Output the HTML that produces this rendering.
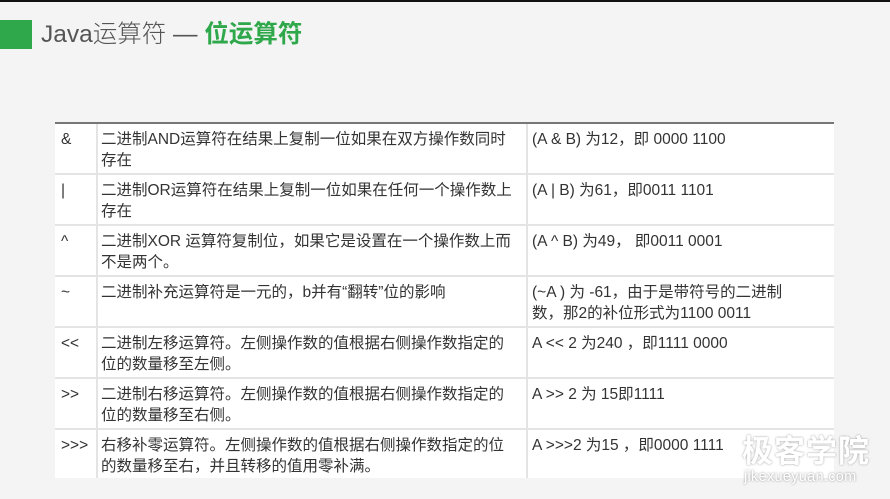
<!DOCTYPE html>
<html><head><meta charset="utf-8"><style>
body{margin:0;width:890px;height:499px;background:#f4f4f4;position:relative;overflow:hidden;font-family:"Liberation Sans","Noto Sans CJK SC",sans-serif;}
.top{position:absolute;left:0;top:0;width:890px;height:2px;background:#111}
.sq{position:absolute;left:0;top:20px;width:32px;height:29px;background:#2ea84a}
.title{position:absolute;left:41px;top:17px;font-size:24.5px;color:#555;line-height:36px;font-weight:300}
.title b{color:#2ea84a;font-weight:bold}
.tbl{position:absolute;left:55px;top:122px;width:779px;height:354px;background:#fff;border-top:2px solid #777}
.row{position:absolute;left:0;width:779px;height:51px;border-bottom:2px solid #e4e4e4;box-sizing:border-box}
.c{position:absolute;top:5px;font-size:15.5px;color:#333;line-height:21px;white-space:nowrap}
.c1{left:6px}.c2{left:46px}.c3{left:477px}
.v1{position:absolute;left:41px;top:0;width:2px;height:354px;background:#e4e4e4}
.v2{position:absolute;left:471px;top:0;width:2px;height:354px;background:#e4e4e4}
.wm{position:absolute;left:742px;top:434px;color:#fff;font-size:31px;font-weight:bold;letter-spacing:1px;text-shadow:0 0 2px #999;line-height:36px}
.wm2{position:absolute;left:744px;top:469px;color:#fff;font-size:14.5px;text-shadow:0 0 2px #888;letter-spacing:.3px}
</style></head><body>
<div class="top"></div>
<div class="sq"></div>
<div class="title">Java运算符 — <b>位运算符</b></div>
<div class="tbl">
<div class="row" style="top:0"><div class="c c1">&amp;</div><div class="c c2">二进制AND运算符在结果上复制一位如果在双方操作数同时<br>存在</div><div class="c c3">(A &amp; B) 为12，即 0000 1100</div></div>
<div class="row" style="top:51px"><div class="c c1">|</div><div class="c c2">二进制OR运算符在结果上复制一位如果在任何一个操作数上<br>存在</div><div class="c c3">(A | B) 为61，即0011 1101</div></div>
<div class="row" style="top:102px"><div class="c c1">^</div><div class="c c2">二进制XOR 运算符复制位，如果它是设置在一个操作数上而<br>不是两个。</div><div class="c c3">(A ^ B) 为49， 即0011 0001</div></div>
<div class="row" style="top:153px"><div class="c c1">~</div><div class="c c2">二进制补充运算符是一元的，b并有“翻转”位的影响</div><div class="c c3">(~A ) 为 -61，由于是带符号的二进制<br>数，那2的补位形式为1100 0011</div></div>
<div class="row" style="top:204px"><div class="c c1">&lt;&lt;</div><div class="c c2">二进制左移运算符。左侧操作数的值根据右侧操作数指定的<br>位的数量移至左侧。</div><div class="c c3">A &lt;&lt; 2 为240 ，即1111 0000</div></div>
<div class="row" style="top:255px"><div class="c c1">&gt;&gt;</div><div class="c c2">二进制右移运算符。左侧操作数的值根据右侧操作数指定的<br>位的数量移至右侧。</div><div class="c c3">A &gt;&gt; 2 为 15即1111</div></div>
<div class="row" style="top:306px;border-bottom:none"><div class="c c1">&gt;&gt;&gt;</div><div class="c c2">右移补零运算符。左侧操作数的值根据右侧操作数指定的位<br>的数量移至右，并且转移的值用零补满。</div><div class="c c3">A &gt;&gt;&gt;2 为15 ，即0000 1111</div></div>
<div class="v1"></div><div class="v2"></div>
</div>
<div class="wm">极客学院</div>
<div class="wm2">jikexueyuan.com</div>
</body></html>
